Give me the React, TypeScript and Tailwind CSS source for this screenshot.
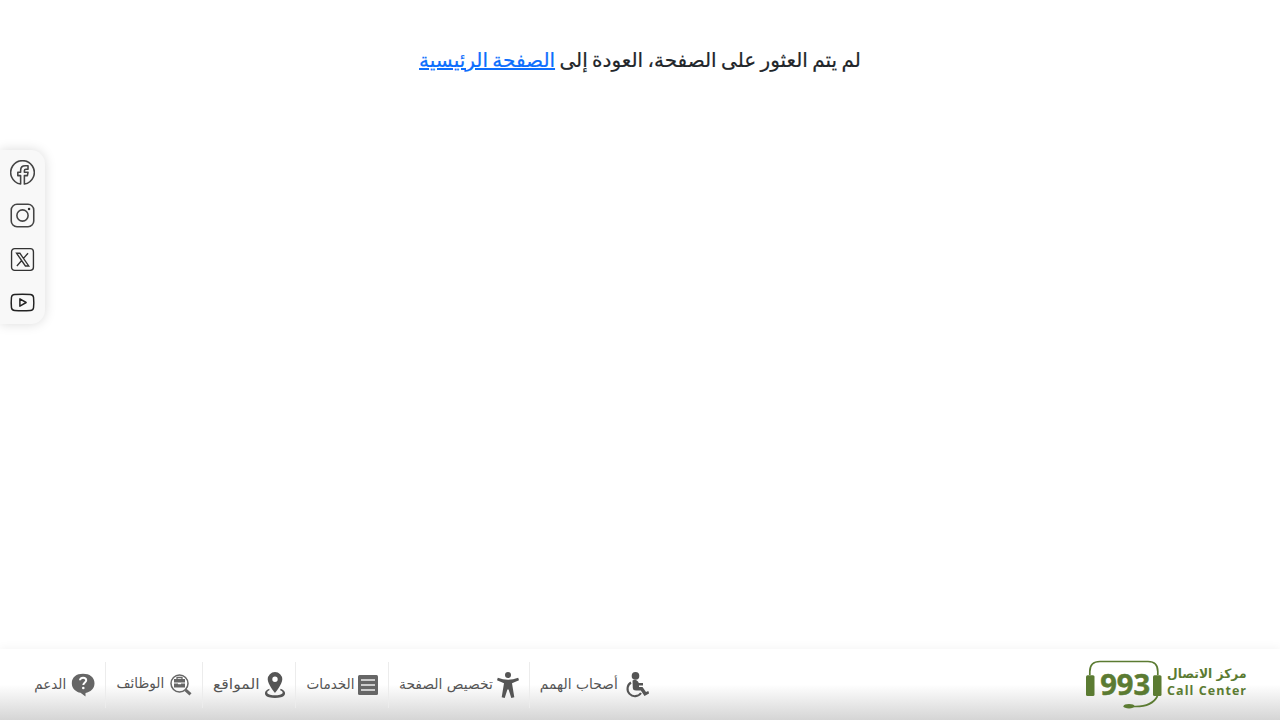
import type { ReactNode } from "react";

function Facebook() {
  return (
    <svg viewBox="0 0 24 24" className="h-[25px] w-[25px]" fill="none" stroke="#444" strokeWidth="1.5" strokeLinejoin="round">
      <path d="M10.200 23.100A11.300 11.300 0 1 1 13.800 23.100V15h2.900l.6-3.200h-3.500v-1.500c0-1 .4-1.500 1.500-1.500h2V5.500h-2.700c-3 0-4.400 1.700-4.400 4.500v1.800H7.500V15h2.700z" />
    </svg>
  );
}

function Instagram() {
  return (
    <svg viewBox="0 0 24 24" className="h-[25px] w-[25px]" fill="none" stroke="#444" strokeWidth="1.5">
      <rect x="1.200" y="1.200" width="21.600" height="21.600" rx="5.500" />
      <circle cx="12" cy="12" r="5.400" />
      <circle cx="18.300" cy="5.700" r="1.200" fill="#333" stroke="none" />
    </svg>
  );
}

function XLogo() {
  return (
    <svg viewBox="0 0 24 24" className="h-[25px] w-[25px]" fill="none" stroke="#333" strokeWidth="1.300">
      <rect x="1.500" y="1.500" width="21" height="21" rx="3" />
      <path d="M6.300 6h3.200l8.500 12.200h-3.200zM17.300 6l-4.600 5.200M11 13.200l-4.400 5" />
    </svg>
  );
}

function YouTube() {
  return (
    <svg viewBox="0 0 24 24" className="h-[25px] w-[25px]" fill="none" stroke="#222" strokeWidth="1.400" strokeLinejoin="round">
      <path d="M4.500 4.300Q12 3.700 19.500 4.300Q22.300 4.500 22.600 7Q23.100 12 22.600 17Q22.300 19.500 19.500 19.700Q12 20.300 4.500 19.700Q1.700 19.500 1.400 17Q.9 12 1.400 7Q1.700 4.500 4.500 4.300z" />
      <path d="M9.500 8.500v7l6-3.500z" />
    </svg>
  );
}

function Wheelchair() {
  return (
    <svg viewBox="0 0 24 26" className="h-[26px] w-6" fill="none" stroke="#555">
      <circle cx="10.500" cy="3.900" r="3.800" fill="#555" stroke="none" />
      <path d="M7.500 8.500Q10.500 6.500 13 9.500L13.800 11H18v2.600h-4V15h3.500l3.500 5 2.300-1 .9 2.500-4.700 2.500-3.700-5.500H11Q8 18.500 7.800 16z" fill="#555" stroke="none" />
      <path d="M6 10.500A7.400 7.400 0 1 0 16 21" strokeWidth="2.100" />
    </svg>
  );
}

function Person() {
  return (
    <svg viewBox="0 0 22 26" className="h-[26px] w-[22px]" fill="#555">
      <circle cx="11" cy="3" r="3" />
      <path d="M.8 5.800Q11 9.700 21.200 5.800L22 8.300 15 11.200 17.300 25.300l-3 .7L11.600 17.500h-1.200L7.700 26l-3-.7L7 11.200 0 8.300z" />
    </svg>
  );
}

function List() {
  return (
    <svg viewBox="0 0 20 20" className="h-5 w-5">
      <rect width="20" height="20" rx="1.500" fill="#666" />
      <path d="M3 5h14M3 10h14M3 15h14" stroke="#eee" strokeWidth="1.700" />
    </svg>
  );
}

function Pin() {
  return (
    <svg viewBox="0 0 20 26" className="h-[26px] w-5">
      <path fill="#555" fillRule="evenodd" d="M10 0a7.300 7.300 0 0 0-7.300 7.300C2.700 12.500 10 21 10 21s7.300-8.500 7.300-13.700A7.300 7.300 0 0 0 10 0zm0 4.500a2.700 2.700 0 1 1 0 5.400 2.700 2.700 0 0 1 0-5.400z" />
      <path fill="#555" d="M4.500 16.700C-1.500 18.500-1.500 24 4 25.200q6 1.400 12 0c5.500-1.200 5.500-6.700-.5-8.500l-.3 1.600c3.500 1.300 3.200 3.700-.3 4.400q-4.900 1-9.800 0c-3.500-.7-3.800-3.100-.8-4.400z" />
    </svg>
  );
}

function Jobs() {
  return (
    <svg viewBox="0 0 22 22" className="h-[22px] w-[22px]" fill="none" stroke="#666">
      <circle cx="9.500" cy="9.500" r="8.500" strokeWidth="1.500" />
      <path d="M15.500 15.800l5 4.600" strokeWidth="3" />
      <path d="M7 5V3.500h5V5" strokeWidth="1.300" />
      <path fill="#666" stroke="none" d="M4 5h11v3.500H4zM4 9.400h4v.9h3v-.9h4v4.100H4z" />
    </svg>
  );
}

function Support() {
  return (
    <svg viewBox="0 0 24 24" className="h-6 w-6">
      <path fill="#666" d="M12 .7C5.500.7.800 4 .800 10.200c0 5.500 4.200 8.700 8.700 9.600L14.500 23.600v-3.700c5-.8 9-4.200 9-9.700C23.500 4 18.500.7 12 .7z" />
      <path d="M9 7.300C9 3.900 15.200 4 15.200 7.300c0 2.200-2.900 2.200-2.900 4.800" fill="none" stroke="#fff" strokeWidth="2" />
      <circle cx="12.300" cy="15" r="1.300" fill="#fff" />
    </svg>
  );
}

function CallCenterLogo() {
  return (
    <svg viewBox="0 0 162 50" className="h-[50px] w-[162px] shrink-0 overflow-visible text-[#5b7b32]" fill="currentColor" direction="ltr">
      <path d="M3.800 15V11.500Q3.800 1.500 14 1.500H62Q71.800 1.500 71.800 11.500V15M71.500 36Q66 47 48 46.500" fill="none" stroke="currentColor" strokeWidth="1.700" />
      <rect x="0" y="15.300" width="8.500" height="20.700" rx="1.500" />
      <rect x="67" y="15.300" width="8.500" height="20.700" rx="1.500" />
      <ellipse cx="43" cy="46.200" rx="5.500" ry="2.300" />
      <text x="14.200" y="35" textLength="50" lengthAdjust="spacingAndGlyphs" className="font-['Open_Sans'] text-[28.500px] font-bold" stroke="currentColor" strokeWidth="0.500">993</text>
      <text x="81" y="18" textLength="79.500" lengthAdjust="spacingAndGlyphs" className="font-['DejaVu_Sans'] text-[13px] font-bold">مركز الاتصال</text>
      <text x="81" y="35" textLength="79" className="font-['Open_Sans'] text-[12.500px] font-bold">Call Center</text>
    </svg>
  );
}

type Item = { label: string; icon: ReactNode; cell: string; text: string };

const items: Item[] = [
  { label: "أصحاب الهمم", icon: <Wheelchair />, cell: "w-[130px] gap-[7px]", text: "scale-x-[0.99] pb-px" },
  { label: "تخصيص الصفحة", icon: <Person />, cell: "w-[141px] gap-1", text: "scale-x-[0.99] pb-px" },
  { label: "الخدمات", icon: <List />, cell: "w-[93px] gap-1", text: "scale-x-[0.97] pb-px" },
  { label: "المواقع", icon: <Pin />, cell: "w-[93px] gap-[5px]", text: "scale-x-[1.12] pb-px" },
  { label: "الوظائف", icon: <Jobs />, cell: "w-[97px] gap-1.5", text: "scale-x-[0.97] pb-[3px]" },
  { label: "الدعم", icon: <Support />, cell: "w-[82px] gap-[5px] border-l-0", text: "scale-x-[0.96] pb-px" },
];

function Footer() {
  return (
    <footer className="flex h-[71px] items-center justify-between bg-linear-to-b from-white from-50% to-[#d5d5d5] pr-8 pl-[23px] shadow-[0_0_10px_rgba(0,0,0,0.06)]">
      <CallCenterLogo />
      <nav className="flex">
        {items.map((item) => (
          <a key={item.label} className={`flex h-[46px] items-center border-l border-[#ececec] pr-[10px] ${item.cell}`}>
            <span className="shrink-0">{item.icon}</span>
            <span className={`origin-right whitespace-nowrap text-[14px] leading-5 text-[#555] ${item.text}`}>{item.label}</span>
          </a>
        ))}
      </nav>
    </footer>
  );
}

export default function App() {
  return (
    <div dir="rtl" className="flex h-screen flex-col overflow-hidden bg-white font-['DejaVu_Sans',sans-serif] text-[#212529]">
      <main className="flex flex-1 flex-col">
        <h1 className="mt-[45px] h-[30px] text-center text-[20px] leading-[30px] whitespace-nowrap [word-spacing:-2px] [-webkit-text-stroke:0.2px]">
          لم يتم العثور على الصفحة، العودة إلى{" "}
          <a className="text-[#0d6efd] underline decoration-2">الصفحة الرئيسية</a>
        </h1>
        <aside className="mt-[75px] mr-auto flex h-[174px] w-[45px] flex-col items-center justify-between rounded-r-[14px] bg-[#f8f8f8] pt-[10px] pb-[9px] shadow-[0_0_12px_rgba(0,0,0,0.15)]">
          <Facebook />
          <Instagram />
          <XLogo />
          <YouTube />
        </aside>
      </main>
      <Footer />
    </div>
  );
}
